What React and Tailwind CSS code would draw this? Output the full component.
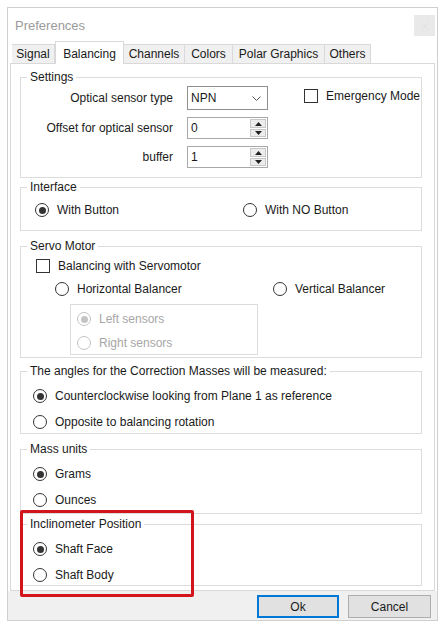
import React from "react";

const font = { fontFamily: '"Liberation Sans", Arial, sans-serif' };

function Radio({ checked, disabled, label }) {
  return (
    <div className={"flex items-center gap-[8px] " + (disabled ? "text-[#a6a6a6]" : "text-[#1a1a1a]")}>
      <span
        className={
          "flex h-[14px] w-[14px] items-center justify-center rounded-full border bg-white " +
          (disabled ? "border-[#c4c4c4]" : "border-[#333333]")
        }
      >
        {checked && (
          <span className={"h-[7px] w-[7px] rounded-full " + (disabled ? "bg-[#c4c4c4]" : "bg-[#333333]")} />
        )}
      </span>
      <span>{label}</span>
    </div>
  );
}

function Check({ label }) {
  return (
    <div className="flex items-center gap-[8px] text-[#1a1a1a]">
      <span className="h-[14px] w-[14px] border border-[#333333] bg-white" />
      <span>{label}</span>
    </div>
  );
}

function Group({ title, className, children }) {
  return (
    <fieldset className={"ml-[9px] w-[402px] border border-[#dcdcdc] " + className}>
      <legend className="ml-[6px] px-[3px] text-[12px] leading-[14px] text-[#1a1a1a]">{title}</legend>
      {children}
    </fieldset>
  );
}

function Spin({ value }) {
  return (
    <div className="flex h-[22px] w-[81px] items-center border border-[#a9a9a9] bg-white">
      <span className="flex-1 pl-[3px] text-[12px]">{value}</span>
      <div className="mr-[1px] flex h-[18px] w-[16px] flex-col gap-[1px]">
        <div className="flex h-[9px] items-center justify-center border border-[#c8c8c8] bg-[#ececec]">
          <svg width="7" height="4" viewBox="0 0 7 4"><path d="M0 4 L3.5 0 L7 4 Z" fill="#222" /></svg>
        </div>
        <div className="flex h-[8px] items-center justify-center border border-[#c8c8c8] bg-[#ececec]">
          <svg width="7" height="4" viewBox="0 0 7 4"><path d="M0 0 L3.5 4 L7 0 Z" fill="#222" /></svg>
        </div>
      </div>
    </div>
  );
}

function Tab({ label, w, selected }) {
  if (selected) {
    return (
      <div
        className={
          "relative z-10 -mb-[1px] flex h-[23px] items-start justify-center border border-b-0 border-[#d9d9d9] bg-white pt-[3px] " +
          w
        }
      >
        {label}
      </div>
    );
  }
  return (
    <div
      className={
        "flex h-[19px] items-center justify-center border border-b-0 border-l-0 border-[#d9d9d9] bg-[#f0f0f0] " +
        w
      }
    >
      {label}
    </div>
  );
}

export default function App() {
  return (
    <div className="relative h-[627px] w-[441px] bg-white text-[12px] text-[#1a1a1a]" style={font}>
      <div className="ml-[7px] pt-[7px]">
        <div className="flex h-[614px] w-[431px] flex-col border border-[#cfcfcf] bg-white">
          {/* Title bar */}
          <div className="flex h-[33px] shrink-0 items-start justify-between">
            <span className="mt-[8px] ml-[7px] text-[13px] text-[#9b9b9b]">Preferences</span>
            <div className="mt-[7px] mr-[2px] flex h-[21px] w-[21px] items-center justify-center bg-[#e9e9e9]">
              <svg width="8" height="8" viewBox="0 0 8 8">
                <path d="M0.5 0.5 L7.5 7.5 M7.5 0.5 L0.5 7.5" stroke="#e0e0e0" strokeWidth="1" />
              </svg>
            </div>
          </div>
          {/* Tabs */}
          <div className="flex h-[22px] shrink-0 items-end pl-[4px]">
            <Tab label="Signal" w="w-[43px] border-l" />
            <Tab label="Balancing" w="w-[69px]" selected />
            <Tab label="Channels" w="w-[61px]" />
            <Tab label="Colors" w="w-[48px]" />
            <Tab label="Polar Graphics" w="w-[92px]" />
            <Tab label="Others" w="w-[46px]" />
          </div>
          {/* Panel */}
          <div className="ml-[2px] flex h-[528px] w-[425px] shrink-0 flex-col border border-[#d9d9d9] bg-white">
            <Group title="Settings" className="mt-[6px] h-[108px]">
              <div className="mt-[2px] flex">
                <div className="grid grid-cols-[152px_81px] gap-x-[14px]">
                  <div className="flex h-[24px] items-center justify-end">Optical sensor type</div>
                  <div className="flex h-[24px] items-center border border-[#8f8f8f] bg-white pl-[3px]">
                    <span className="flex-1">NPN</span>
                    <svg className="mr-[6px]" width="9" height="5" viewBox="0 0 9 5">
                      <path d="M0.5 0.5 L4.5 4.5 L8.5 0.5" fill="none" stroke="#555" strokeWidth="1" />
                    </svg>
                  </div>
                  <div className="mt-[7px] flex h-[22px] items-center justify-end">Offset for optical sensor</div>
                  <div className="mt-[7px]">
                    <Spin value="0" />
                  </div>
                  <div className="mt-[7px] flex h-[22px] items-center justify-end">buffer</div>
                  <div className="mt-[7px]">
                    <Spin value="1" />
                  </div>
                </div>
                <div className="ml-[36px] mt-[1px] h-[14px]">
                  <Check label="Emergency Mode" />
                </div>
              </div>
            </Group>

            <Group title="Interface" className="mt-[2px] h-[51px]">
              <div className="mt-[3px] flex h-[26px] items-center pl-[14px]">
                <div className="w-[208px]">
                  <Radio checked label="With Button" />
                </div>
                <Radio label="With NO Button" />
              </div>
            </Group>

            <Group title="Servo Motor" className="mt-[8px] h-[119px]">
              <div className="flex h-[26px] items-center pl-[15px]">
                <Check label="Balancing with Servomotor" />
              </div>
              <div className="flex h-[20px] items-center pl-[34px]">
                <div className="w-[218px]">
                  <Radio label="Horizontal Balancer" />
                </div>
                <Radio label="Vertical Balancer" />
              </div>
              <div className="ml-[49px] mt-[5px] h-[51px] w-[188px] border border-[#dcdcdc] pl-[6px] pt-[2px]">
                <div className="flex h-[24px] items-center">
                  <Radio checked disabled label="Left sensors" />
                </div>
                <div className="flex h-[24px] items-center">
                  <Radio disabled label="Right sensors" />
                </div>
              </div>
            </Group>

            <Group title="The angles for the Correction Masses will be measured:" className="mt-[6px] h-[70px]">
              <div className="mt-[5px] flex h-[26px] items-center pl-[12px]">
                <Radio checked label="Counterclockwise looking from Plane 1 as reference" />
              </div>
              <div className="flex h-[25px] items-center pl-[12px]">
                <Radio label="Opposite to balancing rotation" />
              </div>
            </Group>

            <Group title="Mass units" className="mt-[8px] h-[72px]">
              <div className="mt-[5px] flex h-[26px] items-center pl-[12px]">
                <Radio checked label="Grams" />
              </div>
              <div className="flex h-[26px] items-center pl-[12px]">
                <Radio label="Ounces" />
              </div>
            </Group>

            <Group title="Inclinometer Position" className="mt-[3px] h-[69px]">
              <div className="mt-[5px] flex h-[26px] items-center pl-[12px]">
                <Radio checked label="Shaft Face" />
              </div>
              <div className="flex h-[26px] items-center pl-[12px]">
                <Radio label="Shaft Body" />
              </div>
            </Group>
          </div>
          {/* Bottom strip */}
          <div className="flex flex-1 items-start justify-end gap-[9px] bg-[#f0f0f0] pr-[6px] pt-[4px]">
            <button className="flex h-[23px] w-[82px] items-center justify-center border-2 border-[#0078d7] bg-[#e1e1e1] text-[12px]">
              Ok
            </button>
            <button className="flex h-[23px] w-[83px] items-center justify-center border border-[#adadad] bg-[#e1e1e1] text-[12px]">
              Cancel
            </button>
          </div>
        </div>
      </div>
      {/* Annotation overlay */}
      <div className="pointer-events-none absolute left-[20px] top-[510px] h-[87px] w-[174px] rounded-[2px] border-[3px] border-[#d3141b]" />
    </div>
  );
}
